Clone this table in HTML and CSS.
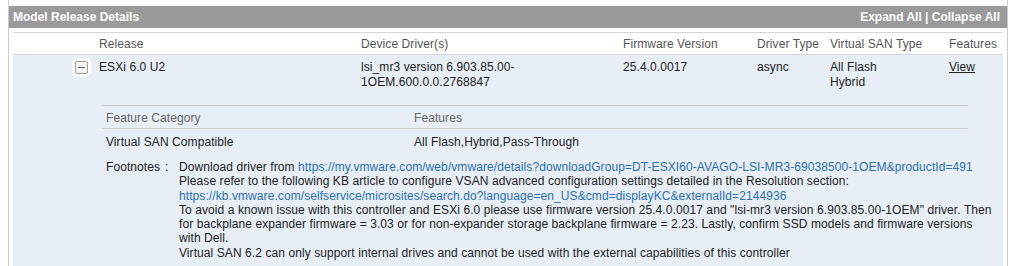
FILE: index.html
```html
<!DOCTYPE html>
<html lang="en">
<head>
    <meta charset="UTF-8">
    <title>Model Release Details</title>
    <link rel="stylesheet" href="styles.css">
</head>
<body>
    <div class="panel">
        <div class="panel-head">
            <span>Model Release Details</span>
            <span>Expand All | Collapse All</span>
        </div>
        <div class="releases">
            <div class="cols col-head">
                <div></div>
                <div>Release</div>
                <div>Device Driver(s)</div>
                <div>Firmware Version</div>
                <div>Driver Type</div>
                <div>Virtual SAN Type</div>
                <div>Features</div>
            </div>
            <div class="release open">
                <div class="cols">
                    <div class="toggle"><span class="minus"></span></div>
                    <div>ESXi 6.0 U2</div>
                    <div>lsi_mr3 version 6.903.85.00-<br>1OEM.600.0.0.2768847</div>
                    <div>25.4.0.0017</div>
                    <div>async</div>
                    <div>All Flash<br>Hybrid</div>
                    <div><a class="view" href="#">View</a></div>
                </div>
                <div class="features">
                    <div class="feat-row feat-head">
                        <div>Feature Category</div>
                        <div>Features</div>
                    </div>
                    <div class="feat-row feat-data">
                        <div>Virtual SAN Compatible</div>
                        <div>All Flash,Hybrid,Pass-Through</div>
                    </div>
                </div>
                <div class="footnotes">
                    <div>Footnotes</div>
                    <div class="colon">:</div>
                    <div>
                        Download driver from <a href="#">https://my.vmware.com/web/vmware/details?downloadGroup=DT-ESXI60-AVAGO-LSI-MR3-69038500-1OEM&amp;productId=491</a><br>
                        Please refer to the following KB article to configure VSAN advanced configuration settings detailed in the Resolution section:<br>
                        <a href="#">https://kb.vmware.com/selfservice/microsites/search.do?language=en_US&amp;cmd=displayKC&amp;externalId=2144936</a><br>
                        To avoid a known issue with this controller and ESXi 6.0 please use firmware version 25.4.0.0017 and "lsi-mr3 version 6.903.85.00-1OEM" driver. Then for backplane expander firmware = 3.03 or for non-expander storage backplane firmware = 2.23. Lastly, confirm SSD models and firmware versions with Dell.<br>
                        Virtual SAN 6.2 can only support internal drives and cannot be used with the external capabilities of this controller
                    </div>
                </div>
            </div>
        </div>
    </div>
</body>
</html>
```

FILE: styles.css
```css
body {
    margin: 0;
    font-family: "Liberation Sans", Arial, sans-serif;
    font-size: 12px;
    letter-spacing: 0.08px;
    color: #222;
    background: #fff;
}
.panel {
    margin: 0 8px;
    padding-top: 6px;
    border-left: 1px solid #ccc;
    border-right: 1px solid #ccc;
    min-height: 300px;
}
.panel-head {
    display: flex;
    justify-content: space-between;
    height: 22px;
    line-height: 23px;
    padding: 0 7px 0 4px;
    background: #9a9a9a;
    color: #fff;
    font-weight: bold;
    letter-spacing: 0;
}
.releases {
    margin: 4px 4px 0 4px;
}
.cols {
    display: grid;
    grid-template-columns: 86px 262px 262px 134px 73px 119px 1fr;
}
.col-head {
    border-top: 1px solid #d6d6d6;
    border-bottom: 1px solid #d6d6d6;
    line-height: 22px;
    height: 21px;
    color: #555;
}
.release {
    background: #e7eef6;
    padding: 5px 0 12px 0;
}
.release .cols {
    line-height: 15px;
}
.toggle {
    display: flex;
    justify-content: flex-end;
    padding-right: 11px;
}
.minus {
    position: relative;
    width: 11px;
    height: 11px;
    margin-top: 1px;
    border: 1px solid #a0a0a0;
    border-radius: 2px;
    background: #f4f4f4;
    box-shadow: 0 0 0 3px #fff;
}
.minus::after {
    content: "";
    position: absolute;
    left: 2px;
    right: 2px;
    top: 5px;
    height: 1px;
    background: #666;
}
.view {
    color: #222;
    text-decoration: underline;
}
.features {
    margin: 15px 35px 0 89px;
}
.feat-row {
    display: grid;
    grid-template-columns: 308px 1fr;
    padding-left: 4px;
    line-height: 23px;
}
.feat-head {
    border-top: 1px solid #d0d0d0;
    border-bottom: 1px solid #d0d0d0;
    line-height: 22px;
    padding-top: 1px;
    height: 21px;
    color: #666;
}
.feat-data {
    padding-top: 2px;
}
.footnotes {
    display: grid;
    grid-template-columns: 56px 17px 1fr;
    margin: 6px 8px 0 93px;
    line-height: 14.3px;
}
.colon {
    padding-left: 3px;
}
.footnotes a {
    color: #2b70b0;
    text-decoration: none;
}
```
